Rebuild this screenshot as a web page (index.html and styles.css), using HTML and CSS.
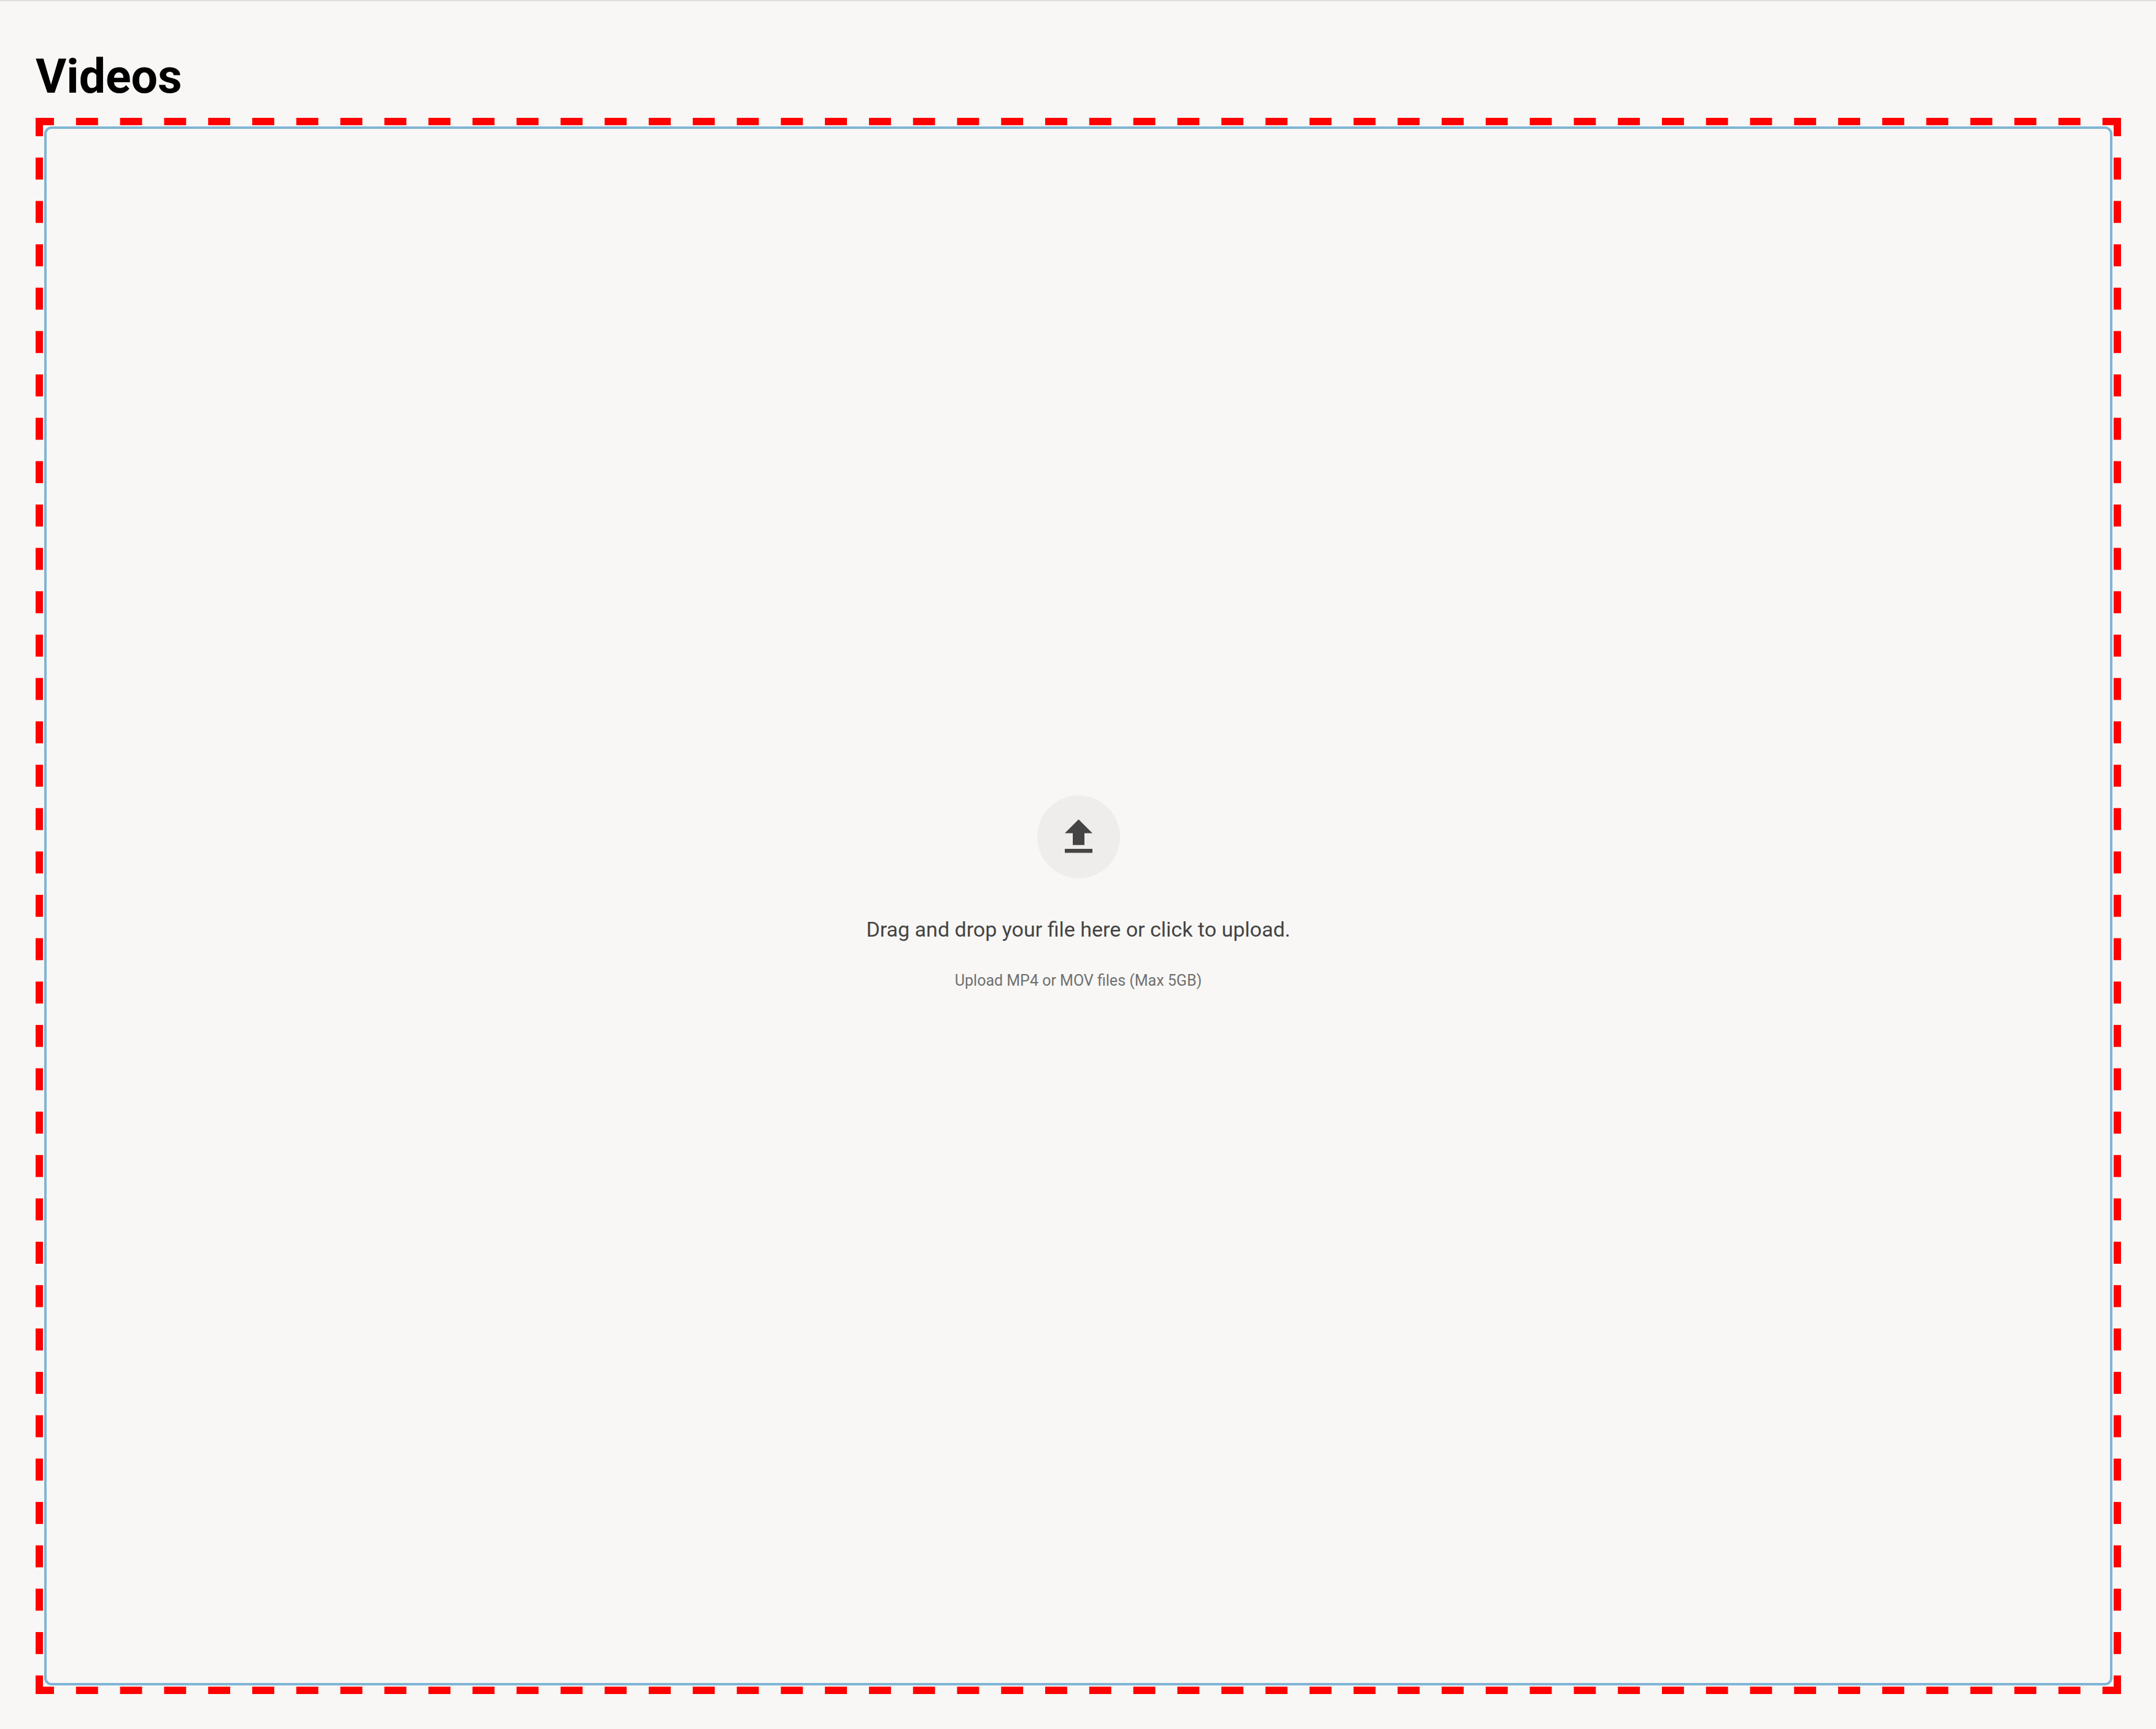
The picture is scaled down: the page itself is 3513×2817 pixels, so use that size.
FILE: index.html
```html
<!DOCTYPE html>
<html lang="en">
<head>
  <meta charset="utf-8">
  <meta name="viewport" content="width=device-width, initial-scale=1">
  <title>Videos</title>
  <link rel="stylesheet" href="styles.css">
</head>
<body>
  <main class="page">
    <h1 class="page-title">Videos</h1>
    <div class="highlight">
      <label class="dropzone" for="video-file">
        <input class="dropzone-input" id="video-file" type="file" accept=".mp4,.mov">
        <span class="dropzone-icon">
          <svg viewBox="0 0 135 135" aria-hidden="true">
            <path d="M67.500 39L90 61.500H77V80.700H58V61.500H45ZM45 87H90V93.600H45Z" fill="#444444"/>
          </svg>
        </span>
        <span class="dropzone-text">Drag and drop your file here or click to upload.</span>
        <span class="dropzone-hint">Upload MP4 or MOV files (Max 5GB)</span>
      </label>
    </div>
  </main>
</body>
</html>
```
FILE: styles.css
```css
* {
  box-sizing: border-box;
}

body {
  margin: 0;
  background: #f8f7f5;
  font-family: Roboto, "Liberation Sans", sans-serif;
}

.page {
  display: flex;
  flex-direction: column;
  min-height: 100vh;
  padding: 78px 57px 57px 58px;
  border-top: 2px solid #dfdedc;
}

.page-title {
  margin: 0 0 22px;
  color: #000;
  font-size: 77px;
  font-weight: 700;
  line-height: 90px;
}

/* Dashed frame: each side repeats a dash-gap tile from corner to corner */
.highlight {
  --dash-x: linear-gradient(90deg, #f00 25%, transparent 25% 75%, #f00 75%);
  --dash-y: linear-gradient(#f00 25%, transparent 25% 75%, #f00 75%);
  display: flex;
  flex: 1;
  padding: 12px;
  background-image: var(--dash-x), var(--dash-x), var(--dash-y), var(--dash-y);
  background-size: 72px 12px, 72px 12px, 12px 71px, 12px 71px;
  background-position: 0 -12px, 0 calc(100% + 12px), -12px 0, calc(100% + 12px) 0;
  background-repeat: round no-repeat, round no-repeat, no-repeat round, no-repeat round;
  background-origin: content-box;
}

.dropzone {
  display: flex;
  flex: 1;
  flex-direction: column;
  align-items: center;
  justify-content: center;
  margin: 2px;
  padding-bottom: 38px;
  border: 4px solid #7fb5d5;
  border-radius: 12px;
  text-align: center;
  cursor: pointer;
}

.dropzone-input {
  position: absolute;
  width: 1px;
  height: 1px;
  overflow: hidden;
  opacity: 0;
}

.dropzone-icon {
  width: 135px;
  height: 135px;
  margin-bottom: 58px;
  border-radius: 50%;
  background: #eeedeb;
}

.dropzone-icon svg {
  display: block;
}

.dropzone-text {
  margin-bottom: 39px;
  color: #444;
  font-size: 34px;
  line-height: 50px;
}

.dropzone-hint {
  color: #6f6f6f;
  font-size: 25px;
  line-height: 40px;
}
```
